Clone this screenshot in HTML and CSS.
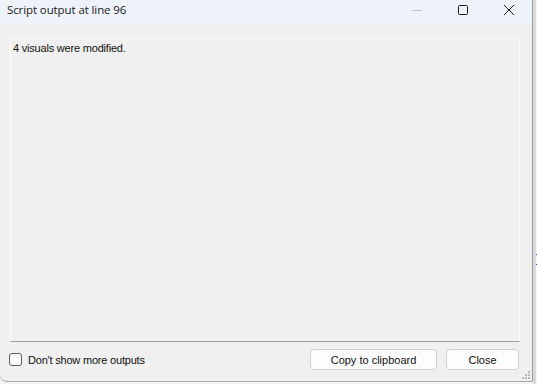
FILE: index.html
```html
<!DOCTYPE html>
<html lang="en">
<head>
  <meta charset="UTF-8" />
  <title>Script output at line 96</title>
  <link rel="stylesheet" href="styles.css">
</head>
<body>
  <div class="window">
    <div class="titlebar">
      <div class="title">Script output at line 96</div>
      <div class="caption-btn min"><span class="min-line"></span></div>
      <div class="caption-btn">
        <svg width="12" height="12" viewBox="0 0 12 12"><rect x="1.5" y="1.5" width="9" height="9" rx="1" fill="none" stroke="#1a1a1a" stroke-width="1"/></svg>
      </div>
      <div class="caption-btn">
        <svg width="12" height="12" viewBox="0 0 12 12"><path d="M1 1 L11 11 M11 1 L1 11" stroke="#1a1a1a" stroke-width="1"/></svg>
      </div>
    </div>
    <div class="content">
      <div class="output">4 visuals were modified.</div>
    </div>
    <div class="footer">
      <label class="check"><span class="box"></span>Don't show more outputs</label>
      <div class="buttons">
        <button class="btn wide">Copy to clipboard</button>
        <button class="btn">Close</button>
      </div>
    </div>
    <svg class="grip" width="10" height="10" viewBox="0 0 10 10" fill="#b8b8b8">
      <rect x="7" y="1" width="2" height="2"/>
      <rect x="4" y="4" width="2" height="2"/><rect x="7" y="4" width="2" height="2"/>
      <rect x="1" y="7" width="2" height="2"/><rect x="4" y="7" width="2" height="2"/><rect x="7" y="7" width="2" height="2"/>
    </svg>
  </div>
  <div class="side"><span class="side-mark"></span></div>
</body>
</html>
```

FILE: styles.css
```css
body {
  margin: 0;
  background: #f3f3f3;
  font-family: "Liberation Sans", Arial, sans-serif;
  display: flex;
  width: 537px;
  height: 384px;
  overflow: hidden;
}
.window {
  position: relative;
  width: 532px;
  height: 381px;
  background: #f0f0f0;
  border-right: 1px solid #9a9a9a;
  border-bottom: 1px solid #a8a8a8;
  border-bottom-left-radius: 7px;
  display: flex;
  flex-direction: column;
  flex-shrink: 0;
}
.titlebar {
  height: 24px;
  background: #eef2f9;
  display: flex;
  align-items: flex-start;
}
.title {
  flex: 1;
  padding: 2px 0 0 7px;
  font-family: "Open Sans", sans-serif;
  font-size: 11.5px;
  letter-spacing: -0.1px;
  color: #1a1a1a;
}
.caption-btn {
  width: 46px;
  height: 20px;
  display: flex;
  align-items: center;
  justify-content: center;
}
.min-line {
  width: 10px;
  height: 1px;
  background: #c4c4c4;
}
.content {
  flex: 1;
  padding: 14px 12px 0 10px;
  display: flex;
}
.output {
  flex: 1;
  border: 1px solid #fafafa;
  border-bottom-color: #a0a0a0;
  padding: 3px 2px;
  font-size: 11px;
  letter-spacing: -0.2px;
  color: #111;
}
.footer {
  height: 39px;
  box-sizing: border-box;
  padding: 0 13px 4px 9px;
  display: flex;
  align-items: center;
  justify-content: space-between;
}
.check {
  display: flex;
  align-items: center;
  font-size: 11px;
  letter-spacing: -0.2px;
  color: #111;
}
.box {
  width: 11px;
  height: 11px;
  border: 1px solid #5a5a5a;
  border-radius: 3px;
  background: #fbfbfb;
  margin-right: 6px;
}
.buttons {
  display: flex;
  gap: 9px;
}
.btn {
  font-family: "Liberation Sans", Arial, sans-serif;
  font-size: 11px;
  color: #111;
  background: #fdfdfd;
  border: 1px solid #d0d0d0;
  border-radius: 4px;
  height: 21px;
  width: 73px;
  padding: 0;
}
.btn.wide {
  width: 127px;
}
.grip {
  position: absolute;
  right: 1px;
  bottom: 1px;
}
.side {
  flex: 1;
  border-left: 3px solid #dadada;
  background: #f6f6f6;
  position: relative;
}
.side-mark {
  position: absolute;
  top: 254px;
  left: 0;
  width: 1px;
  height: 9px;
  border: 1px solid #1f3f9f;
  border-left: none;
  border-radius: 0 3px 3px 0;
}
```
